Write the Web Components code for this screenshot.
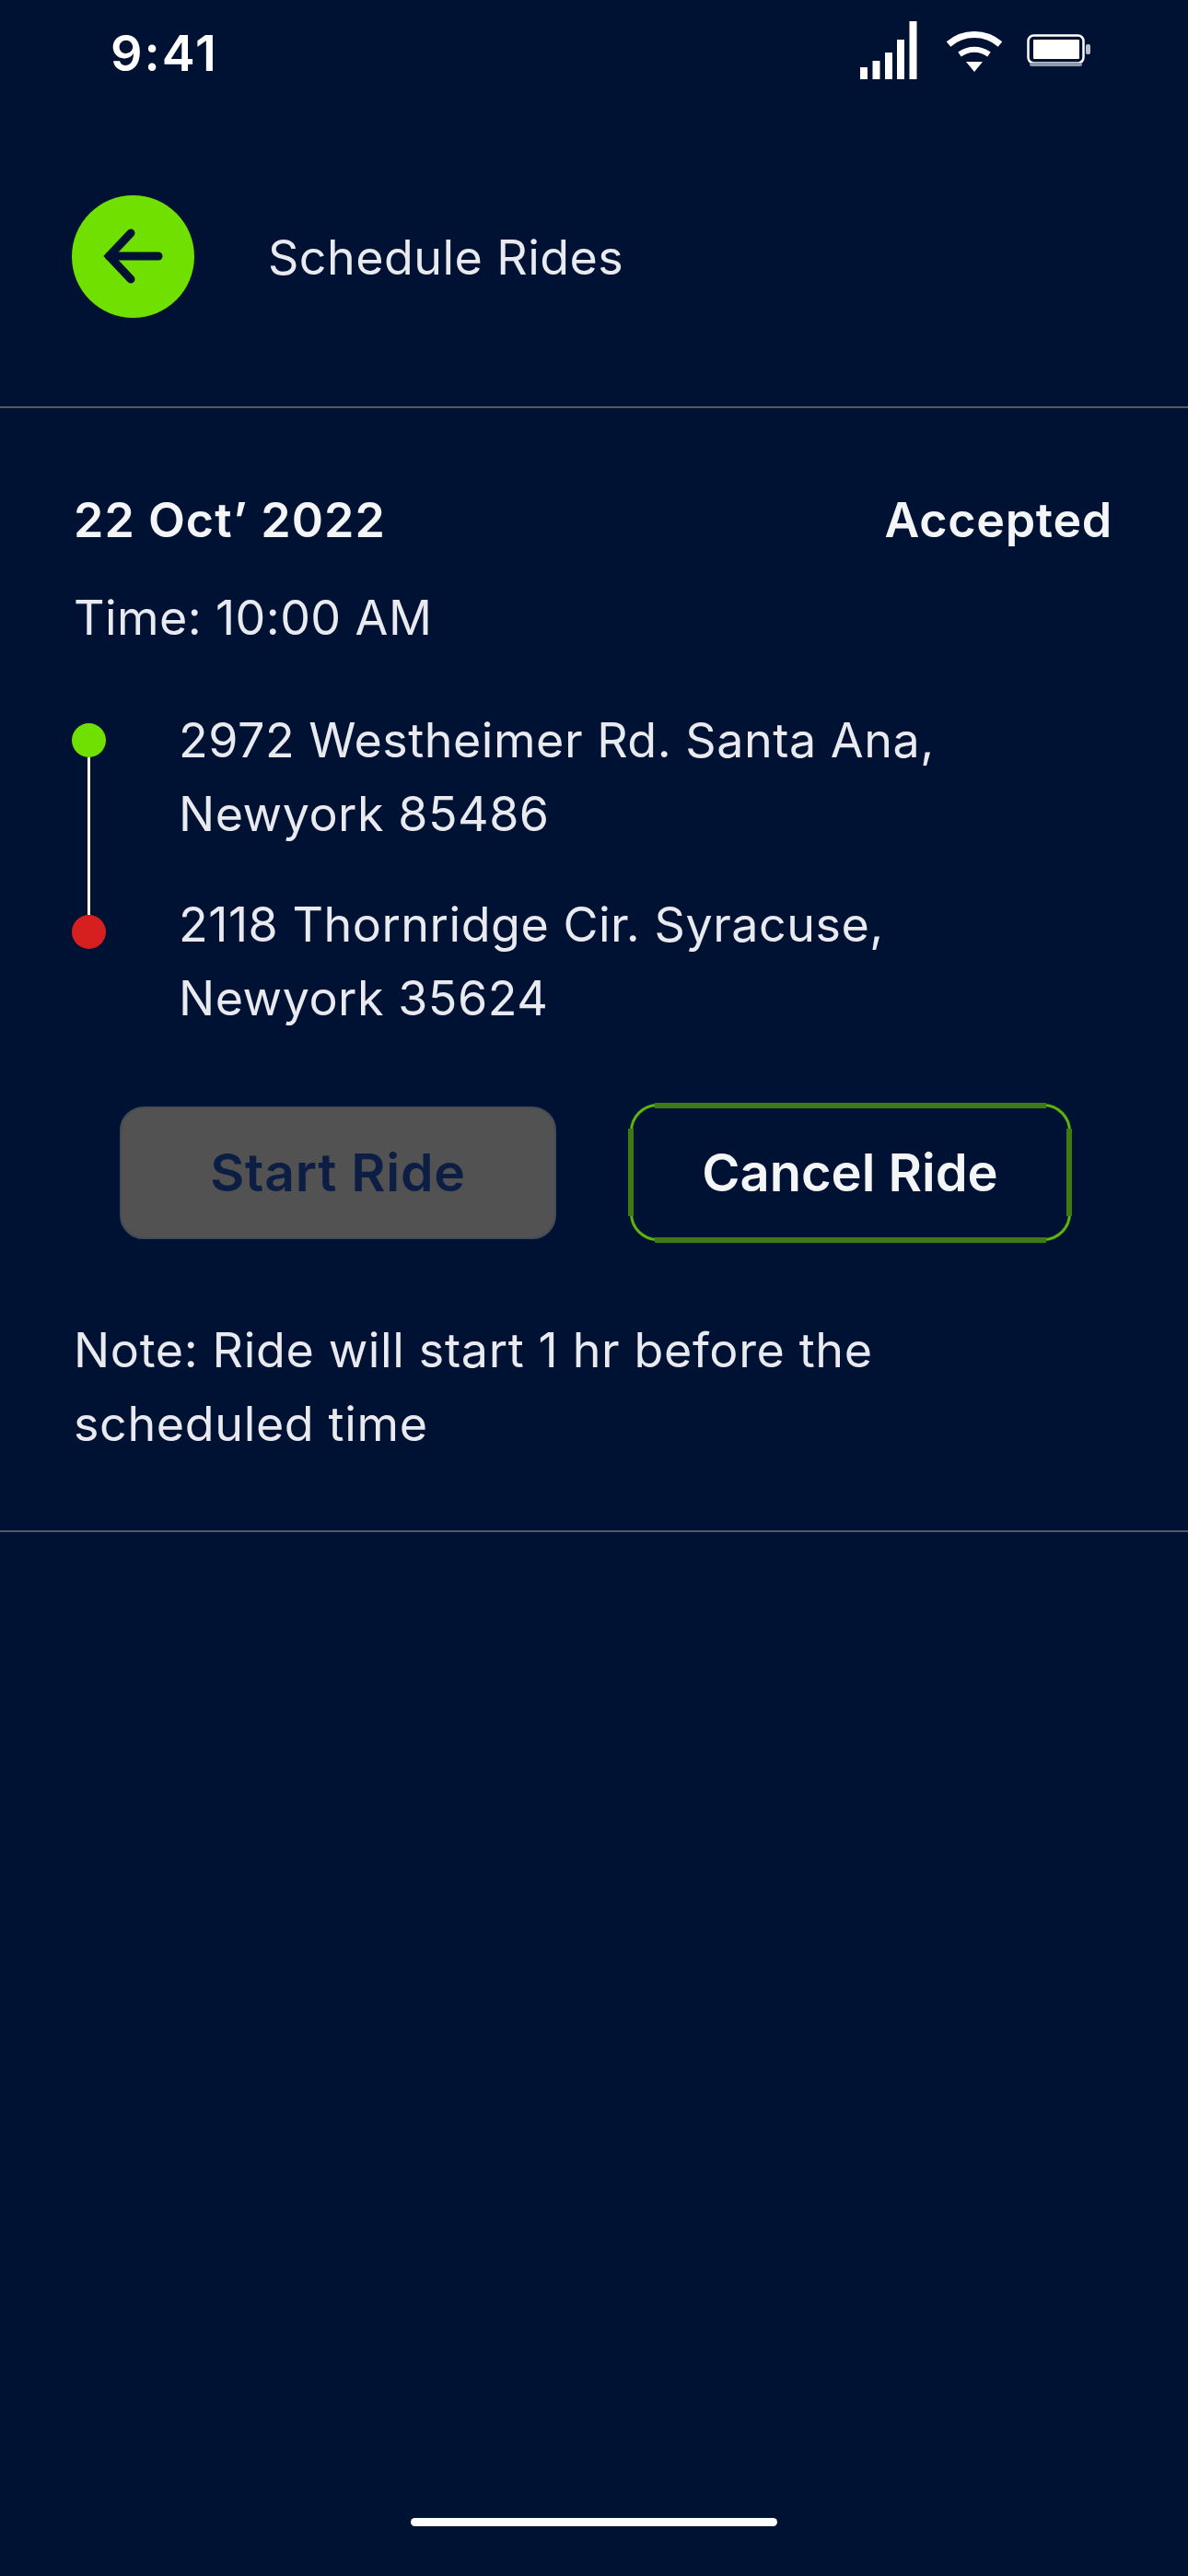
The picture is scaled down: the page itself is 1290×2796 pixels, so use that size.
<!DOCTYPE html>
<html>
<head>
<meta charset="utf-8">
<title>Schedule Rides</title>
<style>
  html, body { margin: 0; padding: 0; background: #001233; }
  body { width: 1290px; height: 2796px; overflow: hidden; font-family: Inter, "Liberation Sans", sans-serif; color: #e8eaef; }
  ride-screen { display: flex; }
</style>
</head>
<body>
<ride-screen>
  <status-bar slot="top" time="9:41"></status-bar>
  <app-header slot="top">Schedule Rides</app-header>
  <ride-card date="22 Oct’ 2022" status="Accepted" time="Time: 10:00 AM">
    <route-line slot="route">
      <span slot="from">2972 Westheimer Rd. Santa Ana,<br>Newyork 85486</span>
      <span slot="to">2118 Thornridge Cir. Syracuse,<br>Newyork 35624</span>
    </route-line>
    <ride-button slot="actions" variant="disabled">Start Ride</ride-button>
    <ride-button slot="actions" variant="outline">Cancel Ride</ride-button>
    <span slot="note">Note: Ride will start 1 hr before the<br>scheduled time</span>
  </ride-card>
</ride-screen>

<script>
'use strict';

class RideScreen extends HTMLElement {
  constructor() {
    super();
    this.attachShadow({mode: 'open'}).innerHTML = `<style>
        :host {
          display: flex;
          flex-direction: column;
          width: 1290px;
          height: 2796px;
          background: #001233;
        }
        .content { flex: 1; }
        .home-bar { display: flex; justify-content: center; padding-bottom: 54px; }
        .home-bar span {
          width: 398px;
          height: 9px;
          border-radius: 5px;
          background: #fff;
        }
      </style>
      <slot name="top"></slot>
      <div class="content"><slot></slot></div>
      <div class="home-bar"><span></span></div>`;
  }
}
customElements.define('ride-screen', RideScreen);

class StatusBar extends HTMLElement {
  constructor() {
    super();
    this.attachShadow({mode: 'open'}).innerHTML = `<style>
        :host {
          display: flex;
          justify-content: space-between;
          align-items: flex-start;
          height: 212px;
          box-sizing: border-box;
          padding: 24px 105px 0 120px;
        }
        .time {
          font: 600 54px/68px Inter, sans-serif;
          letter-spacing: 2px;
          color: #fff;
        }
        .icons { display: flex; align-items: flex-start; }
        svg { display: block; }
        .signal { margin: -1px 28px 0 0; }
        .wifi { margin: 8px 26px 0 0; }
        .battery { margin-top: 11px; }
      </style>
      <div class="time"></div>
      <div class="icons">
        <svg class="signal" width="66" height="64" viewBox="0 0 66 64" fill="#fff">
          <rect x="1" y="50" width="8" height="13"/>
          <rect x="14.500" y="43" width="8" height="20"/>
          <rect x="28" y="34" width="8" height="29"/>
          <rect x="41" y="20" width="8" height="43"/>
          <rect x="54.500" y="0" width="8" height="63"/>
        </svg>
        <svg class="wifi" width="62" height="47" viewBox="0 0 62 47">
          <path d="M3 16C19 2 43 2 59 16" fill="none" stroke="#fff" stroke-width="7"/>
          <path d="M15 27C25 20 37 20 47 27" fill="none" stroke="#fff" stroke-width="6"/>
          <path d="M22 35H40L31 46Z" fill="#fff"/>
        </svg>
        <svg class="battery" width="70" height="38" viewBox="0 0 70 38">
          <rect x="1.500" y="3.500" width="60" height="30" rx="6" fill="none" stroke="#fff" stroke-width="2.500"/>
          <rect x="3" y="33" width="57" height="4" rx="2" fill="#8f98aa"/>
          <rect x="7" y="8" width="50" height="21" rx="1" fill="#fff"/>
          <rect x="64" y="13" width="5" height="11" rx="2" fill="#b8bdc9"/>
        </svg>
      </div>`;
    this.shadowRoot.querySelector('.time').textContent = this.getAttribute('time');
  }
}
customElements.define('status-bar', StatusBar);

class AppHeader extends HTMLElement {
  constructor() {
    super();
    this.attachShadow({mode: 'open'}).innerHTML = `<style>
        :host {
          display: flex;
          align-items: center;
          gap: 80px;
          height: 231px;
          box-sizing: border-box;
          padding: 0 0 97px 78px;
          border-bottom: 2px solid #55585f;
          font: 400 52px/60px Inter, sans-serif;
          letter-spacing: 0.450px;
          color: #e8eaef;
        }
        .back {
          width: 133px;
          height: 133px;
          border-radius: 50%;
          background: #70e000;
          display: flex;
          align-items: center;
          justify-content: center;
        }
        .label { padding-top: 4px; }
        svg { display: block; }
      </style>
      <div class="back">
        <svg width="66" height="60" viewBox="0 0 66 60" fill="none" stroke="#001233" stroke-width="9" stroke-linecap="round" stroke-linejoin="miter">
          <path d="M30 5 6.500 30 30 55"/>
          <path d="M6.500 30H60"/>
        </svg>
      </div>
      <div class="label"><slot></slot></div>`;
  }
}
customElements.define('app-header', AppHeader);

class RouteLine extends HTMLElement {
  constructor() {
    super();
    this.attachShadow({mode: 'open'}).innerHTML = `<style>
        :host {
          display: grid;
          grid-template-columns: 37px 1fr;
          column-gap: 79px;
          font: 400 52px/80px Inter, sans-serif;
          letter-spacing: 0.520px;
          color: #e8eaef;
        }
        .track {
          grid-row: 1 / span 2;
          display: flex;
          flex-direction: column;
          align-items: center;
          padding-top: 21px;
        }
        .dot { width: 37px; height: 37px; border-radius: 50%; flex: none; }
        .green { background: #70e000; }
        .red { background: #d62020; }
        .wire { width: 3px; height: 171px; background: #fff; }
        .from { padding-bottom: 40px; }
      </style>
      <div class="track">
        <div class="dot green"></div>
        <div class="wire"></div>
        <div class="dot red"></div>
      </div>
      <div class="from"><slot name="from"></slot></div>
      <div class="to"><slot name="to"></slot></div>`;
  }
}
customElements.define('route-line', RouteLine);

class RideButton extends HTMLElement {
  constructor() {
    super();
    this.attachShadow({mode: 'open'}).innerHTML = `<style>
        :host {
          display: flex;
          align-items: center;
          justify-content: center;
          position: relative;
          box-sizing: border-box;
          font: 600 56px/64px Inter, sans-serif;
        }
        :host([variant="disabled"]) {
          width: 474px;
          height: 144px;
          border-radius: 26px;
          background: #525252;
          border: 2px solid #454a55;
          color: #0c1e44;
          font-size: 57px;
          letter-spacing: 0.800px;
        }
        /* thin bright ring, the straight sides are thicker and darker */
        :host([variant="outline"]) {
          width: 479px;
          height: 149px;
          margin: 0 1.500px;
          border-radius: 30px;
          border: 3px solid #5bb50a;
          color: #f4f5f7;
        }
        :host([variant="outline"])::before {
          content: "";
          position: absolute;
          top: -4.500px;
          bottom: -4.500px;
          left: 24px;
          right: 24px;
          border-top: 6px solid #3e7a14;
          border-bottom: 6px solid #3e7a14;
        }
        :host([variant="outline"])::after {
          content: "";
          position: absolute;
          left: -4.500px;
          right: -4.500px;
          top: 24px;
          bottom: 24px;
          border-left: 6px solid #3e7a14;
          border-right: 6px solid #3e7a14;
        }
      </style>
      <slot></slot>`;
  }
}
customElements.define('ride-button', RideButton);

class RideCard extends HTMLElement {
  constructor() {
    super();
    this.attachShadow({mode: 'open'}).innerHTML = `<style>
        :host {
          display: block;
          box-sizing: border-box;
          height: 1220px;
          padding: 0 82px 0 80px;
          border-bottom: 2px solid #55585f;
          font: 400 52px/80px Inter, sans-serif;
          color: #e8eaef;
        }
        .head {
          display: flex;
          justify-content: space-between;
          font-weight: 600;
          color: #f4f5f7;
          padding-top: 82px;
          letter-spacing: 1px;
        }
        .status { letter-spacing: 0.700px; }
        .time { margin-top: 26px; letter-spacing: 0.400px; }
        .route { margin: 53px 0 0 -2px; }
        .actions {
          display: flex;
          align-items: center;
          gap: 78px;
          margin: 74px 0 0 50px;
        }
        .note { margin-top: 79px; letter-spacing: 0.640px; }
      </style>
      <div class="head"><span class="date"></span><span class="status"></span></div>
      <div class="time"></div>
      <div class="route"><slot name="route"></slot></div>
      <div class="actions"><slot name="actions"></slot></div>
      <div class="note"><slot name="note"></slot></div>`;
    this.shadowRoot.querySelector('.date').textContent = this.getAttribute('date');
    this.shadowRoot.querySelector('.status').textContent = this.getAttribute('status');
    this.shadowRoot.querySelector('.time').textContent = this.getAttribute('time');
  }
}
customElements.define('ride-card', RideCard);
</script>
</body>
</html>
